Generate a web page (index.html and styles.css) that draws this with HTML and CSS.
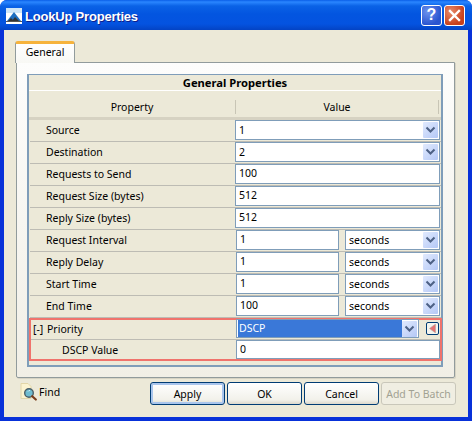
FILE: index.html
```html
<!DOCTYPE html>
<html>
<head>
<meta charset="utf-8">
<title>LookUp Properties</title>
<link rel="stylesheet" href="styles.css">
</head>
<body>
<div class="window">
  <div class="titlebar">
    <svg class="appicon" width="16" height="16" viewBox="0 0 16 16"><rect width="16" height="16" fill="#fff"/><path d="M0 0h16v5H0z" fill="#cfe6f8"/><path d="M1 13 8 4l7 9z" fill="#1f6fc0"/><path d="M2 13l3-3 3 3zM6 13l3-4 4 4z" fill="#333"/><path d="M0 13h16v1H0z" fill="#555"/></svg>
    <span class="title">LookUp Properties</span>
    <span class="capbtn help">?</span>
    <span class="capbtn close"><svg width="13" height="13" viewBox="0 0 13 13"><path d="M2 2l9 9M11 2l-9 9" stroke="#fff" stroke-width="2.4" stroke-linecap="square"/></svg></span>
  </div>
  <div class="client">
    <div class="tabstrip"><div class="tab">General</div></div>
    <div class="panel">
      <div class="grid">
        <div class="caption">General Properties</div>
        <div class="gap"></div>
        <div class="head">
          <div class="hcell hprop">Property</div>
          <div class="hcell hval">Value</div>
        </div>
        <div class="row"><div class="label">Source</div><div class="value"><div class="select wide"><span class="stext">1</span><span class="arrow"><svg width="11" height="8" viewBox="0 0 11 8"><path d="M1.500 1.500l4 4 4-4" fill="none" stroke="#4d6185" stroke-width="2"/></svg></span></div></div></div>
        <div class="row"><div class="label">Destination</div><div class="value"><div class="select wide"><span class="stext">2</span><span class="arrow"><svg width="11" height="8" viewBox="0 0 11 8"><path d="M1.500 1.500l4 4 4-4" fill="none" stroke="#4d6185" stroke-width="2"/></svg></span></div></div></div>
        <div class="row"><div class="label">Requests to Send</div><div class="value"><div class="input wide">100</div></div></div>
        <div class="row"><div class="label">Request Size (bytes)</div><div class="value"><div class="input wide">512</div></div></div>
        <div class="row"><div class="label">Reply Size (bytes)</div><div class="value"><div class="input wide">512</div></div></div>
        <div class="row"><div class="label">Request Interval</div><div class="value"><div class="input num">1</div><div class="select unit"><span class="stext">seconds</span><span class="arrow"><svg width="11" height="8" viewBox="0 0 11 8"><path d="M1.500 1.500l4 4 4-4" fill="none" stroke="#4d6185" stroke-width="2"/></svg></span></div></div></div>
        <div class="row"><div class="label">Reply Delay</div><div class="value"><div class="input num">1</div><div class="select unit"><span class="stext">seconds</span><span class="arrow"><svg width="11" height="8" viewBox="0 0 11 8"><path d="M1.500 1.500l4 4 4-4" fill="none" stroke="#4d6185" stroke-width="2"/></svg></span></div></div></div>
        <div class="row"><div class="label">Start Time</div><div class="value"><div class="input num">1</div><div class="select unit"><span class="stext">seconds</span><span class="arrow"><svg width="11" height="8" viewBox="0 0 11 8"><path d="M1.500 1.500l4 4 4-4" fill="none" stroke="#4d6185" stroke-width="2"/></svg></span></div></div></div>
        <div class="row"><div class="label">End Time</div><div class="value"><div class="input num">100</div><div class="select unit"><span class="stext">seconds</span><span class="arrow"><svg width="11" height="8" viewBox="0 0 11 8"><path d="M1.500 1.500l4 4 4-4" fill="none" stroke="#4d6185" stroke-width="2"/></svg></span></div></div></div>
        <div class="group">
          <div class="row first"><div class="label toggle"><span class="bracket">[-]</span>Priority</div><div class="value top"><div class="select dscp"><span class="stext selected">DSCP</span><span class="arrow"><svg width="11" height="8" viewBox="0 0 11 8"><path d="M1.500 1.500l4 4 4-4" fill="none" stroke="#4d6185" stroke-width="2"/></svg></span></div><span class="mini"><svg width="7" height="9" viewBox="0 0 7 9"><path d="M6.500 0v9L.5 4.500z" fill="#e57373" stroke="#b7a9a0" stroke-width=".6"/></svg></span></div></div>
          <div class="row last"><div class="label sub">DSCP Value</div><div class="value"><div class="input wide">0</div></div></div>
        </div>
      </div>
    </div>
    <div class="footer">
      <div class="find">
        <svg width="17" height="18" viewBox="0 0 17 18"><path d="M1 .5h7l3 3v12H1z" fill="#fbf3d0" stroke="#e2d6a8"/><circle cx="9" cy="10" r="4.300" fill="#6fbcd0" stroke="#4a5f68" stroke-width="1.400"/><path d="M8 8.500a2 2 0 0 1 2-1" stroke="#d9f2f7" fill="none"/><path d="M12.200 13.200l3.600 3.300" stroke="#7a3d1c" stroke-width="2.200" stroke-linecap="round"/></svg>
        <span>Find</span>
      </div>
      <div class="buttons">
        <div class="btn default">Apply</div>
        <div class="btn">OK</div>
        <div class="btn">Cancel</div>
        <div class="btn disabled">Add To Batch</div>
      </div>
    </div>
  </div>
</div>
</body>
</html>
```
FILE: styles.css
```css
* { box-sizing: border-box; }
html, body { margin: 0; padding: 0; }
body { width: 472px; height: 421px; overflow: hidden; background: #fff; font-family: "Noto Sans", "DejaVu Sans", sans-serif; font-size: 10.5px; color: #000; }
.window { width: 472px; height: 421px; display: flex; flex-direction: column; background: #0831d9; border-radius: 7px 7px 0 0; overflow: hidden; }
.titlebar { height: 30px; flex: none; display: flex; align-items: center; padding: 0 7px 0 6px; background: linear-gradient(#0a5fe8 0, #2a86ff 2px, #0a62e6 6px, #0355e0 14px, #0453e0 24px, #0343c4 30px); }
.appicon { flex: none; margin-top: 2px; }
.title { flex: 1; margin: 2px 0 0 3px; color: #fff; font-family: "Liberation Sans", sans-serif; font-weight: bold; font-size: 13px; letter-spacing: -0.2px; text-shadow: 1px 1px 0 #0f1f8c; }
.capbtn { width: 21px; height: 21px; margin-left: 2px; border: 1px solid #fff; border-radius: 3px; display: flex; align-items: center; justify-content: center; color: #fff; font-family: "Liberation Sans", sans-serif; font-weight: bold; font-size: 16px; }
.help { background: radial-gradient(circle at 30% 30%, #6d93ee, #2a55d0 70%); }
.close { background: radial-gradient(circle at 30% 30%, #e88a6b, #c8401c 70%); }
.client { flex: 1; margin: 0 4px 4px; background: #ece9d8; padding: 11px 12px 0 11px; display: flex; flex-direction: column; }
.tabstrip { height: 21px; display: flex; flex: none; position: relative; z-index: 1; }
.tab { width: 60px; height: 22px; background: linear-gradient(#fff, #f8f8f4); border: 1px solid #919b9c; border-bottom: 0; border-top: 3px solid #f6b33c; border-radius: 3px 3px 0 0; text-align: center; line-height: 17px; }
.panel { width: 439px; height: 316px; margin-left: 1px; flex: none; border: 1px solid #919b9c; border-radius: 0 0 2px 2px; box-shadow: 1px 1px 0 #d6d3c4; background: linear-gradient(#fdfdfc, #f1efe6); padding: 11px 11px 0 10px; }
.grid { width: 416px; height: 293px; border: 2px solid #7f9db9; border-top-width: 1px; background: #ece9d8; }
.caption { height: 15px; text-align: center; font-weight: bold; font-size: 11.2px; line-height: 16px; }
.gap { height: 7px; border-top: 1px solid #fff; }
.head { height: 23px; display: flex; border-bottom: 3px solid #d6d2c2; }
.hcell { display: flex; align-items: center; justify-content: center; padding-bottom: 1px; }
.hprop { width: 207px; border-right: 1px solid #c8c5b5; margin: 3px 0; }
.hval { flex: 1; border-right: 1px solid #c8c5b5; margin: 3px 2px 3px 0; }
.row { height: 22px; display: flex; border-bottom: 1px solid #bdbcb4; margin-left: 1px; }
.label { width: 206px; padding: 0 0 2px 16px; display: flex; align-items: center; }
.toggle { padding-left: 2px; }
.bracket { width: 14px; }
.group .sub { padding: 0 0 0 31px; }
.value { flex: 1; display: flex; gap: 6px; padding-right: 1px; }
.input { height: 20px; background: #fff; border: 1px solid #7f9db9; padding-left: 3px; line-height: 17px; }
.wide { width: 205px; }
.num { width: 103px; }
.unit { width: 95px; }
.select { height: 20px; background: #fff; border: 1px solid #7f9db9; display: flex; align-items: center; padding: 1px; }
.stext { flex: 1; padding-left: 2px; line-height: 16px; height: 16px; }
.selected { background: #3a78d8; color: #fff; padding-left: 1px; height: 17px; }
.arrow { width: 15px; height: 16px; flex: none; background: linear-gradient(135deg, #e1eafe, #b4c8f6); display: flex; align-items: center; justify-content: center; border-radius: 1px; }
.dscp { width: 183px; height: 19px; }
.mini { width: 13px; height: 13px; margin-top: 3px; border: 1px solid #003c74; border-radius: 2px; background: #f4f4ee; display: flex; align-items: center; justify-content: center; }
.value.top { gap: 7px; margin-top: -1px; position: relative; }
.group { border: 2px solid #f0736c; margin-right: -1px; }
.group .row { margin-left: 0; }
.group .first { height: 20px; }
.group .last { border-bottom: 0; height: 19px; }
.group .last .input { height: 19px; width: 204px; }
.group .value { padding-right: 0; }
.group .label { width: 205px; }
.footer { flex: 1; display: flex; align-items: flex-start; justify-content: space-between; padding-top: 4px; }
.find { display: flex; align-items: center; gap: 2px; margin: 1px 0 0 5px; }
.buttons { display: flex; gap: 2px; }
.btn { width: 75px; height: 23px; border: 1px solid #003c74; border-radius: 3px; background: linear-gradient(#fff, #f2f1ea 80%, #dcd8cc); display: flex; align-items: center; justify-content: center; }
.default { box-shadow: inset 0 0 0 2px #a9c5ec; }
.disabled { border-color: #c9c7ba; background: #f0eee2; color: #a1a192; }
```
